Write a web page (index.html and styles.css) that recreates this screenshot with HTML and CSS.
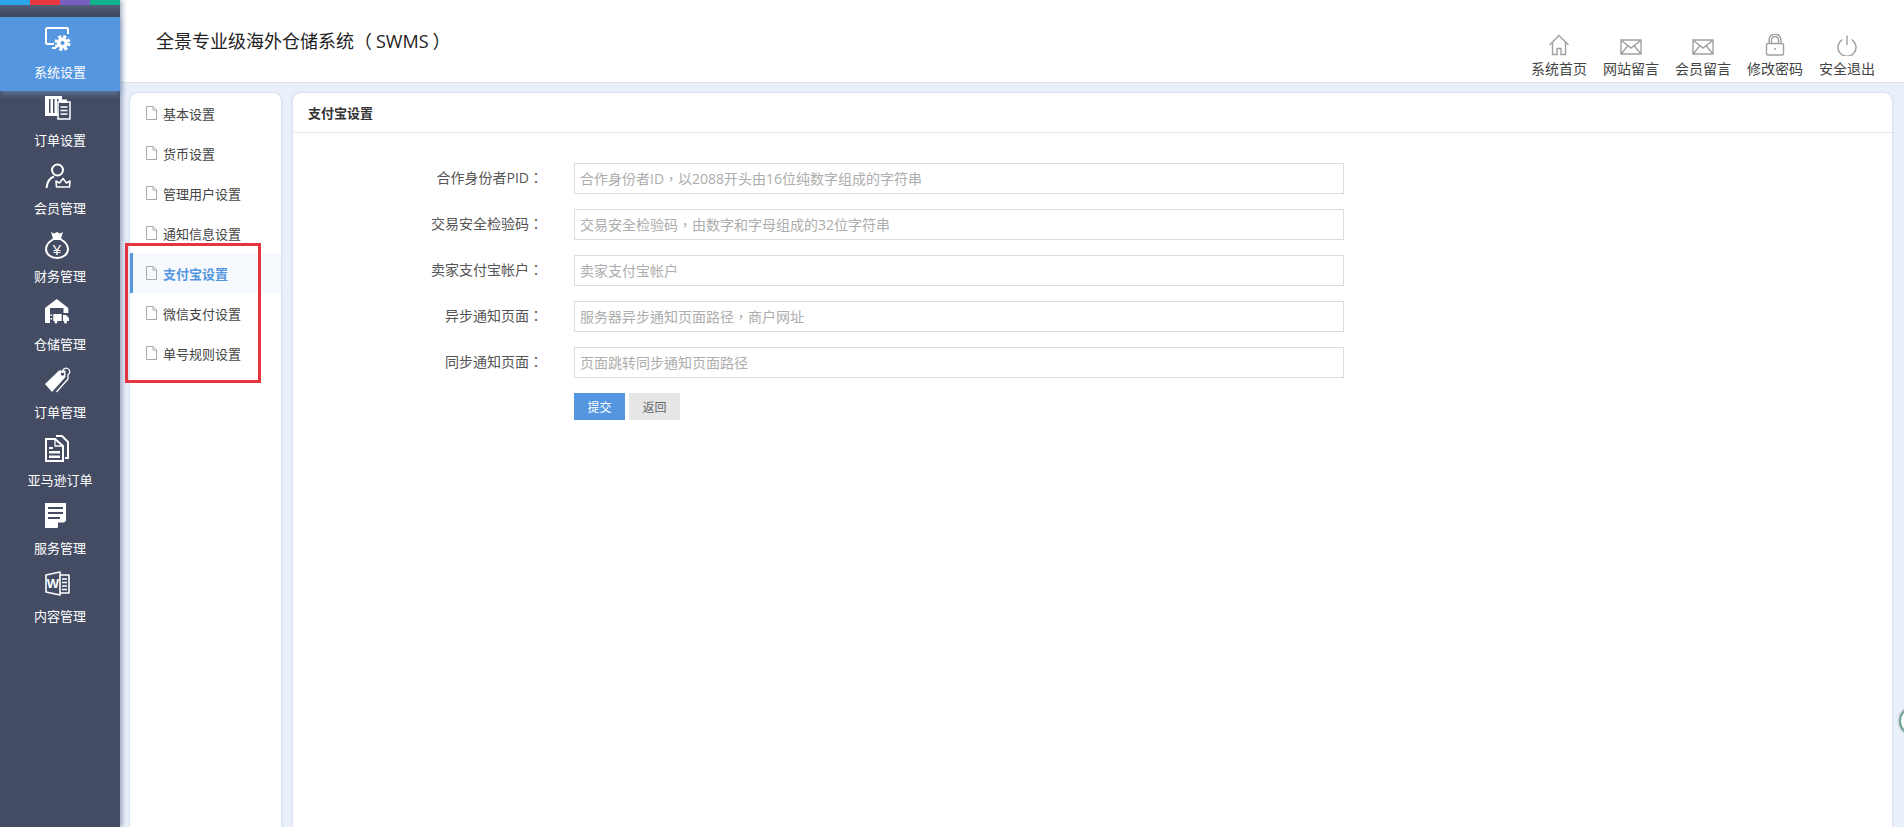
FILE: index.html
```html
<!DOCTYPE html>
<html lang="zh-CN">
<head>
<meta charset="utf-8">
<title>全景专业级海外仓储系统（SWMS）</title>
<link rel="stylesheet" href="styles.css">
</head>
<body>
<div class="app">
  <aside class="sidebar">
    <div class="colorbar"><i class="c1"></i><i class="c2"></i><i class="c3"></i><i class="c4"></i></div>
    <div class="sidegap"></div>
    <nav class="sidenav">
      <a class="sideitem active">
        <svg class="sideicon" viewBox="0 0 30 28"><path class="ln" d="M23 1H2.500A1.500 1.500 0 0 0 1 2.500V15.500A1.500 1.500 0 0 0 2.500 17H9M23 1V7M7 21H11"/><circle class="wh" cx="17.500" cy="16" r="5.500"/><circle class="gear" cx="17.500" cy="16" r="6.500"/><circle class="hole-a" cx="17.500" cy="16" r="2"/></svg>
        <span>系统设置</span>
      </a>
      <a class="sideitem">
        <svg class="sideicon" viewBox="0 0 30 28"><path class="wh" d="M0 1H17V21H0Z"/><path class="dk" d="M4 4H5.500V18H4ZM8 4H9.500V18H8ZM12 4H13.500V18H12Z"/><path class="boxd" d="M13 7H25V24H13Z"/><path class="wh" d="M16 4.500H22V8H16Z"/><path class="ln1" d="M15.500 12H22.500M15.500 15.500H22.500M15.500 19H22.500"/></svg>
        <span>订单设置</span>
      </a>
      <a class="sideitem">
        <svg class="sideicon" viewBox="0 0 30 28"><circle class="ln" cx="12.500" cy="7" r="5.500"/><path class="ln" d="M1.500 25C2 19 5 15 9 13.500"/><path class="ln1b" d="M11.500 24H24.500L25 18L21.500 20L18 15.500L14.500 20L11 18Z"/></svg>
        <span>会员管理</span>
      </a>
      <a class="sideitem">
        <svg class="sideicon" viewBox="0 0 30 28"><path class="ln" d="M8 8.500C3.500 11 1 14.500 1 18C1 23.500 6 27 12 27C18 27 23 23.500 23 18C23 14.500 20.500 11 16 8.500"/><path class="wh" d="M6 1L9 2.500L12 1L15 2.500L18 1L16 7.500H8Z"/><path class="wh" d="M7.500 7H16.500V9H7.500Z"/><text class="glyph" x="12" y="23.500" text-anchor="middle">¥</text></svg>
        <span>财务管理</span>
      </a>
      <a class="sideitem">
        <svg class="sideicon" viewBox="0 0 30 28"><path class="wh" d="M0 9L11.700 0L23.300 9V14H18.500V9H5V24H1Q0 24 0 23Z"/><path class="wh" d="M5.500 15.500H7.300V17H5.500ZM5.500 19H7.300V20.500H5.500Z"/><path class="wh" d="M8.300 15H16.700V22H8.300ZM18 16H21L24 19V22H18Z"/><circle class="wh" cx="11" cy="23" r="1.500"/><circle class="wh" cx="20.500" cy="23" r="1.500"/></svg>
        <span>仓储管理</span>
      </a>
      <a class="sideitem">
        <svg class="sideicon" viewBox="0 0 30 28"><path class="wh" d="M0 17L14 3.500H20.500V10L7 25Z"/><circle class="dkc" cx="17.500" cy="7" r="1.700"/><path class="ln1" d="M11.500 25L23 12V7"/><path class="ln1" d="M17.500 6C17 2.500 20 0.500 22.500 1.500C25 2.500 25.500 5.500 23.500 7.500"/></svg>
        <span>订单管理</span>
      </a>
      <a class="sideitem">
        <svg class="sideicon" viewBox="0 0 30 28"><path class="ln" d="M10 4H1V26H18V11Z"/><path class="ln1" d="M10 4V11H18"/><path class="wh" d="M4 12H8V14H4ZM4 16H15V18.500H4ZM4 20.500H15V23H4Z"/><path class="ln" d="M11 1H17L23 7V23H20"/></svg>
        <span>亚马逊订单</span>
      </a>
      <a class="sideitem">
        <svg class="sideicon" viewBox="0 0 30 28"><path class="wh" d="M0 0H21V18L12 25H0Z"/><path class="dk" d="M3 4H18V6H3ZM3 9H18V11H3ZM3 14H15V16H3Z"/><path class="dk" d="M13 25V19.500H20Z"/></svg>
        <span>服务管理</span>
      </a>
      <a class="sideitem">
        <svg class="sideicon" viewBox="0 0 30 28"><path class="ln1b" d="M1 4L15 1V24L1 21Z"/><path class="ln1b" d="M15 4H24V22H15"/><path class="ln1" d="M17 8H22M17 11.500H22M17 15H22M17 18.500H22"/><text class="glyph-w" x="8" y="17" text-anchor="middle">W</text></svg>
        <span>内容管理</span>
      </a>
    </nav>
  </aside>

  <div class="main">
    <header class="header">
      <h1 class="title">全景专业级海外仓储系统<span class="pct" lang="zh-TW">（</span><span class="code">SWMS</span><span class="pct" lang="zh-TW">）</span></h1>
      <nav class="topnav">
        <a class="topitem">
          <svg class="topicon" viewBox="0 0 22 22"><path d="M1.500 11L11 1.500L20.500 11M4.500 8.500V20.500H9V14.500H13V20.500H17.500V8.500"/></svg>
          <span>系统首页</span>
        </a>
        <a class="topitem">
          <svg class="topicon" viewBox="0 0 22 22"><path d="M1 6H21V20H1ZM1.500 6.500L11 14L20.500 6.500M1.500 19.500L8 11.500M20.500 19.500L14 11.500"/></svg>
          <span>网站留言</span>
        </a>
        <a class="topitem">
          <svg class="topicon" viewBox="0 0 22 22"><path d="M1 6H21V20H1ZM1.500 6.500L11 14L20.500 6.500M1.500 19.500L8 11.500M20.500 19.500L14 11.500"/></svg>
          <span>会员留言</span>
        </a>
        <a class="topitem">
          <svg class="topicon" viewBox="0 0 22 22"><path d="M5 9.500V6A6 6 0 0 1 17 6V9.500M7.500 9.500V6A3.500 3.500 0 0 1 14.500 6V9.500M4 9.500H18A1.500 1.500 0 0 1 19.500 11V19.500A1.500 1.500 0 0 1 18 21H4A1.500 1.500 0 0 1 2.500 19.500V11A1.500 1.500 0 0 1 4 9.500ZM11 14V16"/></svg>
          <span>修改密码</span>
        </a>
        <a class="topitem">
          <svg class="topicon" viewBox="0 0 22 22"><path d="M11 1.500V11M6.500 5.500A9 9 0 1 0 15.500 5.500"/></svg>
          <span>安全退出</span>
        </a>
      </nav>
    </header>

    <div class="content">
      <aside class="subpanel">
        <a class="subitem"><svg class="fileicon" viewBox="0 0 11 14"><path d="M.5.500H7L10.500 4V13.500H.5ZM7 .5V4H10.500"/></svg>基本设置</a>
        <a class="subitem"><svg class="fileicon" viewBox="0 0 11 14"><path d="M.5.500H7L10.500 4V13.500H.5ZM7 .5V4H10.500"/></svg>货币设置</a>
        <a class="subitem"><svg class="fileicon" viewBox="0 0 11 14"><path d="M.5.500H7L10.500 4V13.500H.5ZM7 .5V4H10.500"/></svg>管理用户设置</a>
        <a class="subitem"><svg class="fileicon" viewBox="0 0 11 14"><path d="M.5.500H7L10.500 4V13.500H.5ZM7 .5V4H10.500"/></svg>通知信息设置</a>
        <a class="subitem current"><svg class="fileicon" viewBox="0 0 11 14"><path d="M.5.500H7L10.500 4V13.500H.5ZM7 .5V4H10.500"/></svg>支付宝设置</a>
        <a class="subitem"><svg class="fileicon" viewBox="0 0 11 14"><path d="M.5.500H7L10.500 4V13.500H.5ZM7 .5V4H10.500"/></svg>微信支付设置</a>
        <a class="subitem"><svg class="fileicon" viewBox="0 0 11 14"><path d="M.5.500H7L10.500 4V13.500H.5ZM7 .5V4H10.500"/></svg>单号规则设置</a>
        <div class="highlight"></div>
      </aside>

      <section class="panel">
        <div class="panelhead">支付宝设置</div>
        <form class="form">
          <label class="row"><span class="lab">合作身份者PID<span class="pct" lang="zh-TW">：</span></span><input class="field" lang="zh-TW" placeholder="合作身份者ID，以2088开头由16位纯数字组成的字符串"></label>
          <label class="row"><span class="lab">交易安全检验码<span class="pct" lang="zh-TW">：</span></span><input class="field" lang="zh-TW" placeholder="交易安全检验码，由数字和字母组成的32位字符串"></label>
          <label class="row"><span class="lab">卖家支付宝帐户<span class="pct" lang="zh-TW">：</span></span><input class="field" lang="zh-TW" placeholder="卖家支付宝帐户"></label>
          <label class="row"><span class="lab">异步通知页面<span class="pct" lang="zh-TW">：</span></span><input class="field" lang="zh-TW" placeholder="服务器异步通知页面路径，商户网址"></label>
          <label class="row"><span class="lab">同步通知页面<span class="pct" lang="zh-TW">：</span></span><input class="field" lang="zh-TW" placeholder="页面跳转同步通知页面路径"></label>
          <div class="actions">
            <button type="button" class="btn primary">提交</button>
            <button type="button" class="btn">返回</button>
          </div>
        </form>
      </section>
    </div>
  </div>
  <div class="floater"></div>
</div>
</body>
</html>
```
FILE: styles.css
```css
* { box-sizing: border-box; }
html, body { margin: 0; height: 100%; overflow: hidden; }
body {
  font-family: "Noto Sans CJK SC", "Noto Sans", sans-serif;
  font-size: 13px;
  color: #333;
  background: #eaf0fa;
}
.app { display: flex; height: 827px; position: relative; overflow: hidden; }
.pct { font-family: "Noto Sans CJK TC", sans-serif; }
.code { padding: 0 4px; }

/* sidebar */
.sidebar {
  width: 120px;
  flex: none;
  background: #434c63;
  box-shadow: 2px 0 5px rgba(40, 60, 110, .45);
  position: relative;
  z-index: 2;
}
.colorbar { display: flex; height: 5px; }
.colorbar i { flex: 1; }
.c1 { background: #2ba6ea; }
.c2 { background: #e8363f; }
.c3 { background: #7a5fc0; }
.c4 { background: #12b28c; }
.sidegap { height: 12px; background: linear-gradient(#535f7a, #3d4559); }
.sidenav { display: flex; flex-direction: column; }
.sideitem {
  height: 68px;
  padding-top: 10px;
  display: flex;
  flex-direction: column;
  align-items: center;
  color: #fff;
  position: relative;
}
.sideitem span { line-height: 20px; margin-top: 7px; white-space: nowrap; }
.sideitem.active {
  height: 74px;
  margin-bottom: -6px;
  background: #5596e0;
  box-shadow: 0 3px 6px rgba(120, 150, 200, .6);
}
.sideicon { width: 30px; height: 28px; display: block; overflow: visible; }
.ln { fill: none; stroke: #fff; stroke-width: 2; }
.ln1 { fill: none; stroke: #fff; stroke-width: 1.300; }
.ln1b { fill: none; stroke: #fff; stroke-width: 1.600; stroke-linejoin: round; }
.wh { fill: #fff; }
.dk { fill: #434c63; }
.dkc { fill: #434c63; }
.boxd { fill: #434c63; stroke: #fff; stroke-width: 1.500; }
.gear { fill: none; stroke: #fff; stroke-width: 3; stroke-dasharray: 3 2.100; }
.hole-a { fill: #5596e0; }
.glyph { fill: #fff; font: 400 15px "Liberation Sans", sans-serif; }
.glyph-w { fill: #fff; font: 700 13px "Liberation Sans", sans-serif; }

/* main */
.main { flex: 1; min-width: 0; display: flex; flex-direction: column; }
.header {
  height: 83px;
  flex: none;
  background: #fff;
  border-bottom: 1px solid #dde3ee;
  display: flex;
  justify-content: space-between;
  align-items: flex-end;
  padding: 0 29px 4px 36px;
}
.title {
  margin: 0;
  align-self: flex-start;
  padding-top: 26px;
  font-family: "Open Sans", "Noto Sans CJK SC", sans-serif;
  font-size: 18px;
  font-weight: 400;
  line-height: 28px;
  color: #222;
}
.topnav { display: flex; gap: 16px; }
.topitem { width: 56px; display: flex; flex-direction: column; align-items: center; color: #444; }
.topitem span { font-size: 14px; line-height: 20px; white-space: nowrap; }
.topicon { width: 22px; height: 22px; margin-bottom: 2px; fill: none; stroke: #a0a0a0; stroke-width: 1.400; }

.content {
  flex: 1;
  min-height: 0;
  display: flex;
  gap: 12px;
  padding: 10px 12px 0 10px;
}
.subpanel {
  width: 151px;
  flex: none;
  background: #fff;
  border-radius: 8px 8px 0 0;
  box-shadow: 0 0 3px rgba(150, 170, 210, .5);
  position: relative;
}
.subitem {
  height: 40px;
  display: flex;
  align-items: center;
  padding-left: 16px;
  gap: 6px;
  color: #444;
  white-space: nowrap;
}
.subitem.current {
  background: #f6f9fd;
  border-left: 3px solid #5596e0;
  padding-left: 13px;
  color: #5596e0;
  font-weight: 700;
}
.fileicon { width: 11px; height: 14px; fill: none; stroke: #a9a9a9; stroke-width: 1; flex: none; }
.highlight {
  position: absolute;
  left: -5px;
  top: 150px;
  width: 136px;
  height: 140px;
  border: 3px solid #e5353f;
  pointer-events: none;
}

.panel {
  flex: 1;
  min-width: 0;
  background: #fff;
  border-radius: 8px 8px 0 0;
  box-shadow: 0 0 3px rgba(150, 170, 210, .5);
}
.panelhead {
  height: 40px;
  padding-left: 15px;
  line-height: 39px;
  font-weight: 700;
  color: #333;
  border-bottom: 1px solid #e3e7ee;
}
.form { display: flex; flex-direction: column; gap: 15px; padding: 30px 0 0 0; }
.row { display: flex; align-items: center; }
.lab {
  width: 250px;
  flex: none;
  text-align: right;
  margin-right: 31px;
  font-family: "Open Sans", "Noto Sans CJK SC", sans-serif;
  font-size: 14px;
  color: #555;
  line-height: 28px;
  margin-top: -2px;
}
.field {
  width: 770px;
  height: 31px;
  border: 1px solid #dcdcdc;
  padding: 0 5px;
  font: 14px "Open Sans", "Noto Sans CJK TC", sans-serif;
  color: #333;
  background: #fff;
  outline: none;
}
.field::placeholder { color: #adadad; opacity: 1; }
.actions { display: flex; gap: 4px; padding-left: 281px; }
.btn {
  width: 51px;
  height: 27px;
  border: 0;
  padding: 0;
  background: #e6e6e6;
  color: #666;
  font: 12px "Noto Sans CJK SC", "Noto Sans", sans-serif;
}
.btn.primary { background: #5596e0; color: #fff; }

.floater {
  position: absolute;
  left: 1899px;
  top: 706px;
  width: 30px;
  height: 30px;
  border-radius: 50%;
  border: 2px solid #6aa596;
  background: #fff;
  box-shadow: 0 0 3px rgba(0, 0, 0, .3);
}
```
